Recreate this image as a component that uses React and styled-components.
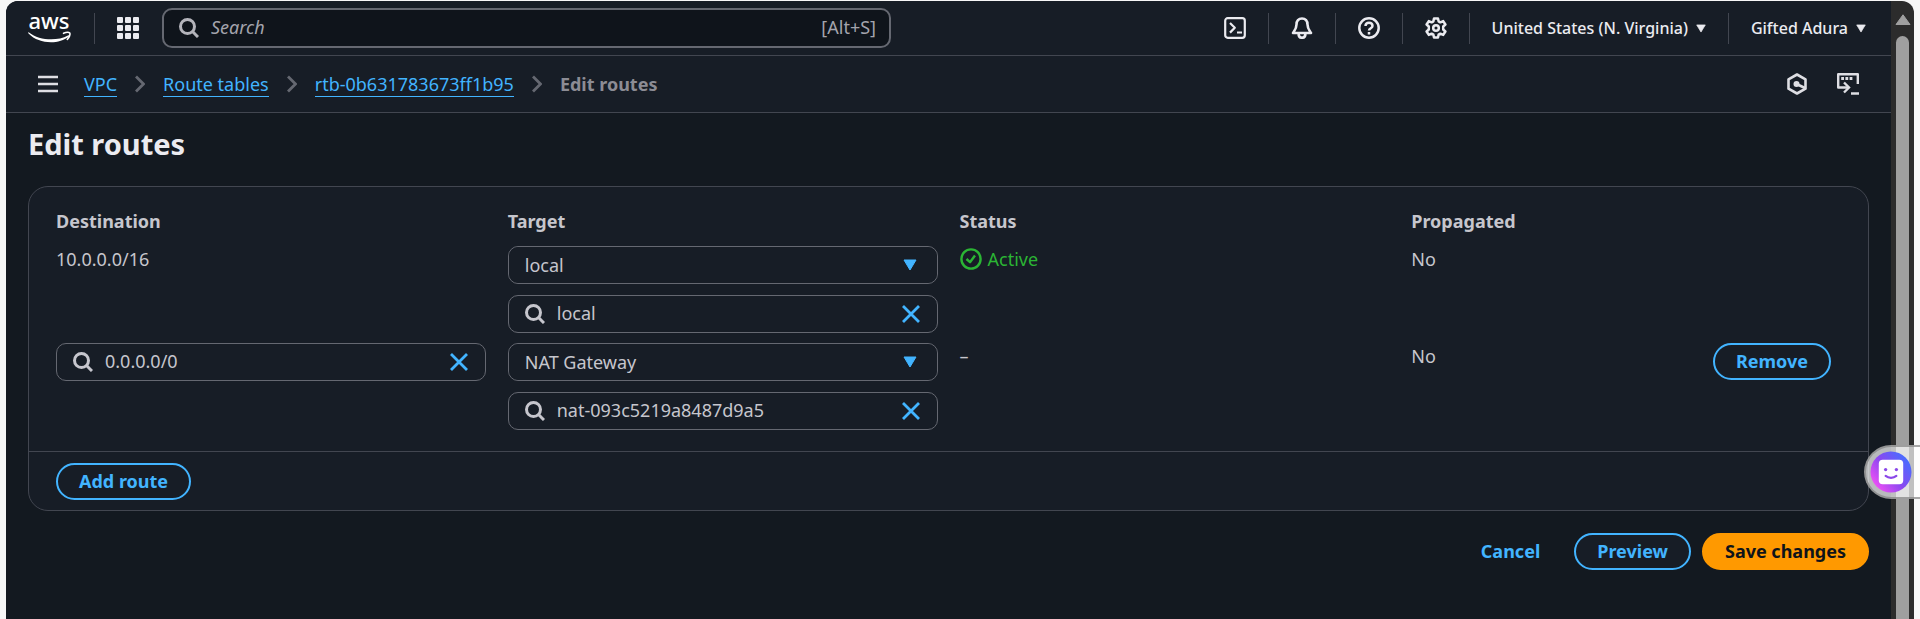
import React, { useState } from "react";
import styled, { createGlobalStyle } from "styled-components";

const color = {
  page: "#131920",
  surface: "#171d26",
  field: "#0f141b",
  line: "#424650",
  fieldLine: "#656871",
  text: "#c6c6cd",
  heading: "#ebebf0",
  muted: "#8c8c94",
  link: "#42b4ff",
  success: "#2bb534",
  accent: "#ff9900",
};

const GlobalStyle = createGlobalStyle`
  *, *::before, *::after { box-sizing: border-box; }
  html { height: 100%; }
  body {
    margin: 0;
    min-height: 100%;
    background: #f7f7f7;
    color: ${color.text};
    font-family: "Noto Sans", "Open Sans", sans-serif;
    font-size: 18px;
    line-height: 24px;
  }
  button, input, select { font: inherit; color: inherit; }
`;

const Window = styled.div`
  position: relative;
  display: flex;
  min-height: 100vh;
  padding: 1px 6px 0;
  overflow: hidden;
`;

const Viewport = styled.div`
  flex: 1;
  min-width: 0;
  background: ${color.page};
  border-top-left-radius: 12px;
  overflow: hidden;
`;

const ScrollTrack = styled.div`
  flex: none;
  display: flex;
  flex-direction: column;
  align-items: center;
  gap: 11px;
  width: 23px;
  padding-top: 13px;
  background: #2c2c2c;
  border-top-right-radius: 12px;
`;

const ScrollThumb = styled.div`
  flex: 1;
  width: 13px;
  border-radius: 7px 7px 0 0;
  background: #9f9f9f;
`;

const TopBar = styled.header`
  display: flex;
  align-items: center;
  height: 55px;
  padding: 0 4px 0 22px;
  background: ${color.surface};
  border-bottom: 1px solid ${color.line};
  color: ${color.heading};
`;

const IconButton = styled.button`
  display: flex;
  padding: 0;
  border: 0;
  background: none;
  color: ${(p) => p.$color || color.heading};
  cursor: pointer;
`;

const Divider = styled.span`
  width: 1px;
  height: 31px;
  margin: 0 22px;
  background: ${color.line};
`;

const HomeLink = styled.a`
  display: flex;
  color: #ffffff;
`;

const GlobalSearch = styled.label`
  display: flex;
  align-items: center;
  gap: 12px;
  flex: 0 1 729px;
  min-width: 0;
  height: 40px;
  margin-left: 23px;
  padding: 0 13px 0 15px;
  border: 2px solid ${color.fieldLine};
  border-radius: 10px;
  background: ${color.field};
  color: #b4b4bb;
`;

const BareInput = styled.input`
  flex: 1;
  min-width: 0;
  height: 100%;
  padding: 0 0 2px;
  border: 0;
  outline: 0;
  background: none;
  &::placeholder {
    color: #a4a4ad;
    font-style: italic;
    opacity: 1;
  }
`;

const Shortcut = styled.span`
  padding-bottom: 2px;
  color: #a4a4ad;
`;

const Tools = styled.nav`
  display: flex;
  align-items: center;
  margin-left: auto;
`;

const MenuButton = styled.button`
  display: flex;
  align-items: center;
  gap: 8px;
  padding: 0;
  margin-right: ${(p) => (p.$last ? "21px" : "0")};
  border: 0;
  background: none;
  font-size: 16px;
  font-weight: 500;
  white-space: nowrap;
  cursor: pointer;
`;

const SubBar = styled.div`
  display: flex;
  align-items: center;
  height: 57px;
  padding: 0 32px;
  background: ${color.surface};
  border-bottom: 1px solid ${color.line};
`;

const Crumbs = styled.ol`
  display: flex;
  align-items: center;
  gap: 18px;
  margin: 0 0 0 26px;
  padding: 0;
  list-style: none;
  white-space: nowrap;
`;

const Crumb = styled.li`
  display: flex;
  align-items: center;
  gap: 18px;
  color: ${color.muted};
  font-weight: ${(p) => (p.$current ? 700 : 400)};
`;

const CrumbLink = styled.a`
  color: ${color.link};
  text-decoration: none;
  border-bottom: 1px solid ${color.link};
`;

const ChevronBox = styled.span`
  display: flex;
  color: ${color.fieldLine};
`;

const SubTools = styled.div`
  display: flex;
  align-items: center;
  gap: 30px;
  margin-left: auto;
`;

const Main = styled.main`
  padding: 14px 22px 50px;
`;

const Title = styled.h1`
  margin: 0 0 26px;
  color: ${color.heading};
  font-size: 29px;
  line-height: 33px;
  font-weight: 700;
`;

const Card = styled.section`
  border: 1px solid ${color.line};
  border-radius: 20px;
  background: ${color.surface};
`;

const RouteTable = styled.table`
  display: block;
  padding: 22px 27px 21px;
  & thead, & tbody { display: block; }
  & tbody { display: grid; gap: 10px; margin-top: 13px; }
`;

const Row = styled.tr`
  display: grid;
  grid-template-columns: repeat(4, minmax(0, 1fr));
  gap: 22px;
`;

const HeadCell = styled.th`
  padding: 0;
  text-align: left;
  font-weight: 700;
`;

const Cell = styled.td`
  display: flex;
  flex-direction: column;
  gap: 11px;
  padding: 0;
`;

const LineText = styled.span`
  display: flex;
  align-items: center;
  gap: 6px;
  padding-top: 1px;
  color: ${(p) => p.$color || "inherit"};
`;

const EndCell = styled(Cell)`
  flex-direction: row;
  align-items: flex-start;
  justify-content: space-between;
  padding-right: 10px;
`;

const Field = styled.div`
  display: flex;
  align-items: center;
  gap: 12px;
  height: 38px;
  padding: 0 17px 0 16px;
  border: 1px solid ${color.fieldLine};
  border-radius: 10px;
`;

const SelectField = styled.div`
  display: grid;
  align-items: center;
  height: 38px;
  border: 1px solid ${color.fieldLine};
  border-radius: 10px;
  & > * { grid-area: 1 / 1; }
  & > svg { justify-self: end; margin-right: 20px; pointer-events: none; }
`;

const Select = styled.select`
  appearance: none;
  width: 100%;
  height: 100%;
  padding: 0 40px 0 16px;
  border: 0;
  outline: 0;
  border-radius: 10px;
  background: ${color.surface};
`;

const CardFooter = styled.div`
  display: flex;
  padding: 11px 27px 10px;
  border-top: 1px solid ${color.line};
`;

const Actions = styled.div`
  display: flex;
  justify-content: flex-end;
  gap: 11px;
  margin-top: 22px;
`;

const looks = {
  normal: `border-color: ${color.link}; background: ${color.surface}; color: ${color.link};`,
  link: `border-color: transparent; background: none; color: ${color.link};`,
  primary: `border-color: ${color.accent}; background: ${color.accent}; color: #0f141a;`,
};

const Button = styled.button`
  height: 37px;
  padding: 0 21px 2px;
  border: 2px solid;
  border-radius: 19px;
  font-weight: 700;
  line-height: 24px;
  white-space: nowrap;
  cursor: pointer;
  ${(p) => looks[p.$look || "normal"]}
`;

const Assistant = styled.button`
  position: absolute;
  top: 445px;
  right: 0;
  display: flex;
  width: 56px;
  height: 54px;
  padding: 4px;
  border: 2px solid rgba(130, 130, 130, 0.7);
  border-right: 0;
  border-radius: 27px 0 0 27px;
  background: rgba(255, 255, 255, 0.7);
  cursor: pointer;
`;

const IconSvg = styled.svg`
  flex: none;
`;

const Svg = ({ w = 22, h = w, box = `0 0 ${w} ${h}`, sw = 2, children }) => (
  <IconSvg
    width={w}
    height={h}
    viewBox={box}
    fill="none"
    stroke="currentColor"
    strokeWidth={sw}
    strokeLinejoin="round"
    aria-hidden="true"
  >
    {children}
  </IconSvg>
);

const SearchIcon = () => (
  <Svg w={20} sw={3}>
    <circle cx="8.5" cy="8.5" r="7" />
    <path d="M13.5 13.5 19 19" />
  </Svg>
);

const CloseIcon = () => (
  <Svg w={18} sw={2.8}>
    <path d="M1 1 17 17M17 1 1 17" />
  </Svg>
);

const Caret = () => (
  <Svg w={10} h={9} box="0 0 14 12" sw={1}>
    <path d="M1 1H13L7 11Z" fill="currentColor" />
  </Svg>
);

const ChevronIcon = () => (
  <Svg w={10} h={18} sw={2.8}>
    <path d="M1 1.5 8.5 9 1 16.5" strokeLinejoin="miter" />
  </Svg>
);

const AwsLogo = () => (
  <svg width="44" height="50" viewBox="0 -10 44 50" role="img" aria-label="aws">
    <text x="21" y="16" textAnchor="middle" fill="currentColor" fontSize="22" fontWeight="500" fontFamily="Noto Sans, sans-serif">aws</text>
    <path d="M1 19.5C11 27.5 29 28.5 40 22.5c1-.5 1.5.5.7 1.2C31 31.5 11 31.5.5 20.5c-.6-.8-.2-1.5.5-1Z" fill="currentColor" />
    <path d="M35.5 20.3c2.500-1 5.500-1 6.300-.3.7 1-.5 4.500-2.500 6.500" fill="none" stroke="currentColor" strokeWidth="1.6" strokeLinecap="round" />
  </svg>
);

const AppsIcon = () => (
  <Svg>
    {[0, 8, 16].map((y) =>
      [0, 8, 16].map((x) => (
        <rect key={`${x}-${y}`} x={x} y={y} width="6" height="6" rx="1" fill="currentColor" stroke="none" />
      ))
    )}
  </Svg>
);

const ShellIcon = () => (
  <Svg sw={2.2}>
    <rect x="1.2" y="1.2" width="19.6" height="19.6" rx="2.5" />
    <path d="M6 6 10.8 10.800 6 15.600M13 15.500h5" />
  </Svg>
);

const BellIcon = () => (
  <Svg sw={2.6}>
    <path d="M11 1.500c-3.500 0-5.500 2.500-5.500 6 0 4-1.500 5.500-3.500 8.500h18c-2-3-3.500-4.500-3.500-8.500 0-3.500-2-6-5.500-6Z" />
    <path d="M7.500 17c.5 5 6.500 5 7 0" />
  </Svg>
);

const HelpIcon = () => (
  <Svg sw={2.5}>
    <circle cx="11" cy="11" r="9.7" />
    <path d="M7.500 9c0-4.500 7-4.500 7 0 0 2.300-3.500 2.200-3.500 4.500" />
    <path d="M11 15v2.500" />
  </Svg>
);

const GearIcon = () => (
  <Svg sw={2.5}>
    <path d="M9 1.500h4l.6 2.800 1.800 1 2.800-1.200 2.200 3.400-2.200 2v3l2.200 2-2.200 3.400-2.800-1.200-1.800 1-.6 2.800H9l-.6-2.800-1.800-1-2.800 1.200-2.200-3.400 2.200-2v-3l-2.200-2 2.200-3.400 2.800 1.200 1.800-1Z" />
    <circle cx="11" cy="11" r="2.8" />
  </Svg>
);

const MenuIcon = () => (
  <Svg w={20} h={18} sw={2.5}>
    <path d="M0 2h20M0 9h20M0 16h20" />
  </Svg>
);

const HexIcon = () => (
  <Svg w={20} h={22} sw={2.6}>
    <path d="M10 1.500 18.500 6.300v9.400L10 20.500 1.500 15.700V6.300Z" />
    <circle cx="9.5" cy="11" r="3" fill="currentColor" stroke="none" />
    <path d="M9.500 11 18 15" />
  </Svg>
);

const WindowShellIcon = () => (
  <Svg w={22} sw={2.4}>
    <path d="M20.800 11V1.200H1.200V14.500H11" />
    <path d="M7 9.500 12 14.500 7 19.500" strokeLinejoin="miter" />
    <path d="M4.200 5.500h11.200" strokeWidth="2.800" strokeDasharray="2.800 1.400" />
    <path d="M14 20.500h8" />
  </Svg>
);

const SuccessIcon = () => (
  <Svg sw={2.4}>
    <circle cx="11" cy="11" r="9.6" />
    <path d="M6.500 11 10 14.200 15 7.500" />
  </Svg>
);

const ArrowUpIcon = () => (
  <Svg w={16} h={11} sw={1}>
    <path d="M8 .8 15 10.500H1Z" fill="#9f9f9f" stroke="#9f9f9f" />
  </Svg>
);

const SmileIcon = () => (
  <svg width="42" height="42" viewBox="0 0 43 43" aria-hidden="true">
    <defs>
      <linearGradient id="assistantFill" x1="0.1" y1="0.85" x2="0.9" y2="0.2">
        <stop offset="0" stopColor="#f050f5" />
        <stop offset="0.5" stopColor="#8a48f0" />
        <stop offset="1" stopColor="#4a6cff" />
      </linearGradient>
    </defs>
    <circle cx="21.5" cy="21.5" r="21" fill="url(#assistantFill)" />
    <rect x="9" y="9" width="25" height="25" rx="4" fill="#fff" />
    <circle cx="16" cy="19" r="1.7" fill="#8a48e8" />
    <circle cx="27" cy="19" r="1.7" fill="#8a48e8" />
    <path d="M16 25.500c3 2.600 8 2.600 11 0" fill="none" stroke="#8a48e8" strokeWidth="2.2" strokeLinecap="round" />
  </svg>
);

function SearchField({ label, initial }) {
  const [value, setValue] = useState(initial);
  return (
    <Field>
      <SearchIcon />
      <BareInput aria-label={label} value={value} onChange={(e) => setValue(e.target.value)} />
      <IconButton type="button" aria-label={`Clear ${label}`} $color={color.link} onClick={() => setValue("")}>
        <CloseIcon />
      </IconButton>
    </Field>
  );
}

function TargetSelect({ label, initial }) {
  return (
    <SelectField>
      <Select aria-label={label} defaultValue={initial}>
        <option>local</option>
        <option>NAT Gateway</option>
      </Select>
      <Svg w={14} h={12} sw={1}>
        <path d="M1 1H13L7 11Z" fill={color.link} stroke={color.link} />
      </Svg>
    </SelectField>
  );
}

const trail = ["VPC", "Route tables", "rtb-0b631783673ff1b95"];

const tools = [
  ["CloudShell", ShellIcon],
  ["Notifications", BellIcon],
  ["Support", HelpIcon],
  ["Settings", GearIcon],
];

export default function App() {
  return (
    <>
      <GlobalStyle />
      <Window>
        <Viewport>
          <TopBar>
            <HomeLink href="#home" aria-label="aws"><AwsLogo /></HomeLink>
            <Divider />
            <IconButton type="button" aria-label="Services"><AppsIcon /></IconButton>
            <GlobalSearch>
              <SearchIcon />
              <BareInput aria-label="Search" placeholder="Search" />
              <Shortcut>[Alt+S]</Shortcut>
            </GlobalSearch>
            <Tools aria-label="Account tools">
              {tools.map(([name, Icon]) => (
                <React.Fragment key={name}>
                  <IconButton type="button" aria-label={name}><Icon /></IconButton>
                  <Divider />
                </React.Fragment>
              ))}
              <MenuButton type="button">United States (N. Virginia)<Caret /></MenuButton>
              <Divider />
              <MenuButton type="button" $last>Gifted Adura<Caret /></MenuButton>
            </Tools>
          </TopBar>
          <SubBar>
            <IconButton type="button" aria-label="Open navigation" $color="#dedee3"><MenuIcon /></IconButton>
            <nav aria-label="Breadcrumbs">
              <Crumbs>
                {trail.map((name) => (
                  <Crumb key={name}>
                    <CrumbLink href="#crumb">{name}</CrumbLink>
                    <ChevronBox><ChevronIcon /></ChevronBox>
                  </Crumb>
                ))}
                <Crumb $current aria-current="page">Edit routes</Crumb>
              </Crumbs>
            </nav>
            <SubTools>
              <IconButton type="button" aria-label="Assistant" $color="#dedee3"><HexIcon /></IconButton>
              <IconButton type="button" aria-label="Open panel" $color="#dedee3"><WindowShellIcon /></IconButton>
            </SubTools>
          </SubBar>
          <Main>
            <Title>Edit routes</Title>
            <Card>
              <RouteTable>
                <thead>
                  <Row>
                    <HeadCell scope="col">Destination</HeadCell>
                    <HeadCell scope="col">Target</HeadCell>
                    <HeadCell scope="col">Status</HeadCell>
                    <HeadCell scope="col">Propagated</HeadCell>
                  </Row>
                </thead>
                <tbody>
                  <Row>
                    <Cell><LineText>10.0.0.0/16</LineText></Cell>
                    <Cell>
                      <TargetSelect label="Target type 1" initial="local" />
                      <SearchField label="target 1" initial="local" />
                    </Cell>
                    <Cell><LineText $color={color.success}><SuccessIcon />Active</LineText></Cell>
                    <EndCell><LineText>No</LineText></EndCell>
                  </Row>
                  <Row>
                    <Cell><SearchField label="destination 2" initial="0.0.0.0/0" /></Cell>
                    <Cell>
                      <TargetSelect label="Target type 2" initial="NAT Gateway" />
                      <SearchField label="target 2" initial="nat-093c5219a8487d9a5" />
                    </Cell>
                    <Cell><LineText>–</LineText></Cell>
                    <EndCell>
                      <LineText>No</LineText>
                      <Button type="button">Remove</Button>
                    </EndCell>
                  </Row>
                </tbody>
              </RouteTable>
              <CardFooter>
                <Button type="button">Add route</Button>
              </CardFooter>
            </Card>
            <Actions>
              <Button type="button" $look="link">Cancel</Button>
              <Button type="button">Preview</Button>
              <Button type="button" $look="primary">Save changes</Button>
            </Actions>
          </Main>
        </Viewport>
        <ScrollTrack aria-hidden="true">
          <ArrowUpIcon />
          <ScrollThumb />
        </ScrollTrack>
        <Assistant type="button" aria-label="Open assistant"><SmileIcon /></Assistant>
      </Window>
    </>
  );
}
